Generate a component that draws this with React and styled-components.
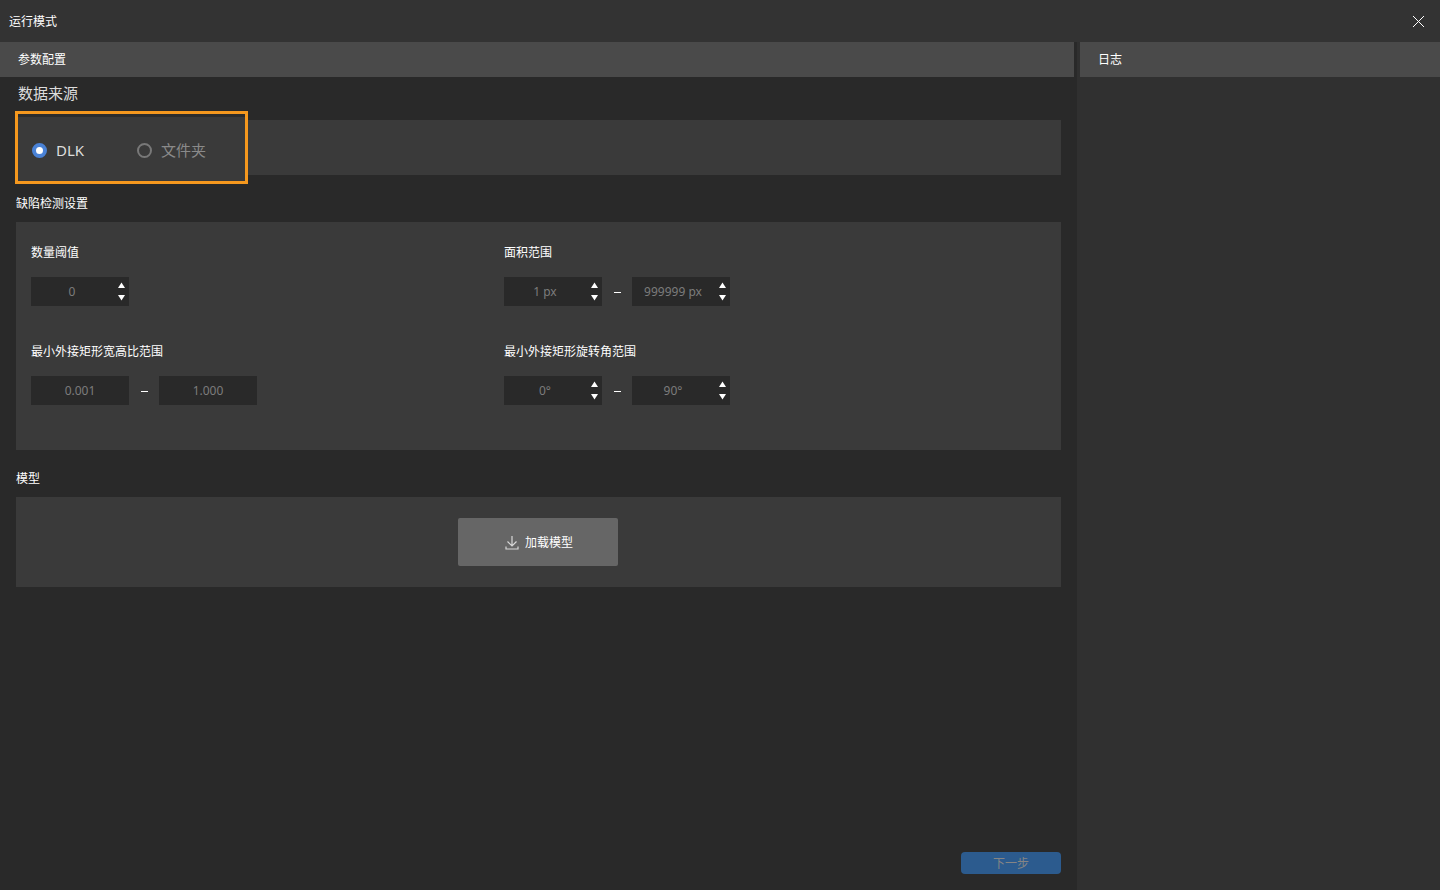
import React, { useState } from 'react';
import styled, { createGlobalStyle, css } from 'styled-components';

const GlobalStyle = createGlobalStyle`
  *, *::before, *::after { box-sizing: border-box; }
  body {
    margin: 0;
    background: #292929;
    color: #ffffff;
    font-family: "Noto Sans", "Noto Sans CJK SC", sans-serif;
    font-size: 12px;
    line-height: 18px;
  }
  button, input { font: inherit; color: inherit; }
  button { border: 0; padding: 0; cursor: pointer; }
`;

const Window = styled.div`
  min-height: 100vh;
  display: flex;
  flex-direction: column;
`;

const TitleBar = styled.header`
  height: 42px;
  padding: 1px 11px 0 9px;
  display: flex;
  align-items: center;
  justify-content: space-between;
  background: #333333;
`;

const WindowTitle = styled.h1`
  margin: 0;
  font-size: 12px;
  line-height: 19px;
  font-weight: 400;
`;

const CloseButton = styled.button`
  width: 21px;
  height: 21px;
  display: grid;
  place-items: center;
  background: none;
`;

const Body = styled.div`
  flex: 1;
  display: flex;
`;

const ConfigPane = styled.main`
  flex: 1;
  min-width: 0;
  display: flex;
  flex-direction: column;
  border-right: 3px solid #292929;
`;

const LogPane = styled.aside`
  flex: 0 0 363px;
  padding-left: 3px;
  background: #303030;
`;

const PaneHeader = styled.h2`
  margin: 0;
  height: 35px;
  padding: 0 18px;
  display: flex;
  align-items: center;
  font-size: 12px;
  font-weight: 400;
  background: #4a4a4a;
`;

const PaneContent = styled.div`
  flex: 1;
  padding: 0 13px 16px 16px;
  display: flex;
  flex-direction: column;
`;

const SectionTitle = styled.h3`
  margin: 0;
  padding: 20px 0 9px;
  font-size: 12px;
  font-weight: 400;

  ${({ $large }) => $large && css`
    padding: 7px 2px 18px;
    font-size: 15px;
    color: #dddddd;
  `}
`;

const Card = styled.section`
  position: relative;
  background: #3a3a3a;
`;

const SourceCard = styled(Card)`
  height: 55px;
`;

const Highlight = styled.div`
  position: absolute;
  top: -9px;
  left: -1px;
  width: 233px;
  height: 73px;
  padding: 5px 14px 0;
  display: flex;
  align-items: center;
  gap: 53px;
  border: 3px solid #f5981e;
  background: linear-gradient(#2c2c2c 3px, #3a3a3a 3px);
`;

const RadioLabel = styled.label`
  display: flex;
  align-items: center;
  gap: 9px;
  font-size: 15px;
  white-space: nowrap;
  color: ${({ $active }) => ($active ? '#dddddd' : '#8a8a8a')};
`;

const Radio = styled.input`
  appearance: none;
  flex: none;
  width: 15px;
  height: 15px;
  margin: 0;
  border: 2px solid #787878;
  border-radius: 50%;

  &:checked {
    border: 4px solid #4a82d6;
    background: #ffffff;
  }
`;

const SettingsCard = styled(Card)`
  padding: 22px 84px 45px 15px;
  display: grid;
  grid-template-columns: 1fr 1fr;
  row-gap: 37px;
`;

const Field = styled.fieldset`
  margin: 0;
  padding: 0;
  border: 0;
  min-width: 0;
`;

const FieldLabel = styled.legend`
  padding: 0 0 15px;
`;

const FieldRow = styled.div`
  display: flex;
  align-items: center;
`;

const Dash = styled.span`
  width: 30px;
  display: flex;
  justify-content: center;

  &::before {
    content: "";
    width: 7px;
    height: 1px;
    margin-top: 2px;
    background: #ffffff;
  }
`;

const Box = styled.div`
  width: 98px;
  height: 29px;
  display: flex;
  background: #292929;
`;

const ValueInput = styled.input`
  flex: 1;
  min-width: 0;
  padding: 0;
  border: 0;
  outline: 0;
  background: none;
  text-align: center;
  color: #7c7c7c;
`;

const Steps = styled.div`
  width: 16px;
  padding: 5px 0 5px 1px;
  display: flex;
  flex-direction: column;
  justify-content: space-between;
  align-items: center;
`;

const StepButton = styled.button`
  display: block;
  width: 9px;
  height: 7px;
  background: none;

  svg { display: block; }
`;

const ModelCard = styled(Card)`
  padding: 21px 22px 21px 21px;
  display: flex;
  justify-content: center;
`;

const LoadButton = styled.button`
  width: 160px;
  height: 48px;
  padding: 2px 0 0 2px;
  display: flex;
  align-items: center;
  justify-content: center;
  gap: 6px;
  border-radius: 2px;
  background: #666666;
`;

const Footer = styled.footer`
  margin-top: auto;
  display: flex;
  justify-content: flex-end;
`;

const NextButton = styled.button`
  width: 100px;
  height: 22px;
  padding-top: 2px;
  border-radius: 4px;
  background: #2c5b8e;
  color: #858585;
`;

function Value({ name, initial, stepper }) {
  const [value, setValue] = useState(initial);
  const step = (delta) =>
    setValue((v) => v.replace(/^\d+/, (n) => String(Math.max(0, Number(n) + delta))));
  return (
    <Box>
      <ValueInput aria-label={name} value={value} onChange={(e) => setValue(e.target.value)} />
      {stepper && (
        <Steps>
          <StepButton type="button" aria-label={`${name} +`} onClick={() => step(1)}>
            <svg width="9" height="7" viewBox="0 0 9 7" fill="#fff"><path d="M4.5 0.5 L8 6 H1 Z" /></svg>
          </StepButton>
          <StepButton type="button" aria-label={`${name} -`} onClick={() => step(-1)}>
            <svg width="9" height="7" viewBox="0 0 9 7" fill="#fff"><path d="M4.5 6.5 L8 1 H1 Z" /></svg>
          </StepButton>
        </Steps>
      )}
    </Box>
  );
}

const fields = [
  { label: '数量阈值', values: ['0'], stepper: true },
  { label: '面积范围', values: ['1 px', '999999 px'], stepper: true },
  { label: '最小外接矩形宽高比范围', values: ['0.001', '1.000'], stepper: false },
  { label: '最小外接矩形旋转角范围', values: ['0°', '90°'], stepper: true },
];

const sources = ['DLK', '文件夹'];

export default function App() {
  const [source, setSource] = useState('DLK');
  return (
    <>
      <GlobalStyle />
      <Window>
        <TitleBar>
          <WindowTitle>运行模式</WindowTitle>
          <CloseButton type="button" aria-label="关闭">
            <svg width="11" height="11" viewBox="0 0 11 11" stroke="#fff" strokeWidth="1" fill="none">
              <path d="M0 0 L11 11 M11 0 L0 11" />
            </svg>
          </CloseButton>
        </TitleBar>
        <Body>
          <ConfigPane>
            <PaneHeader>参数配置</PaneHeader>
            <PaneContent>
              <SectionTitle $large>数据来源</SectionTitle>
              <SourceCard>
                <Highlight role="radiogroup" aria-label="数据来源">
                  {sources.map((s) => (
                    <RadioLabel key={s} $active={s === source}>
                      <Radio type="radio" name="source" checked={s === source} onChange={() => setSource(s)} />
                      {s}
                    </RadioLabel>
                  ))}
                </Highlight>
              </SourceCard>

              <SectionTitle>缺陷检测设置</SectionTitle>
              <SettingsCard>
                {fields.map(({ label, values, stepper }) => (
                  <Field key={label}>
                    <FieldLabel>{label}</FieldLabel>
                    <FieldRow>
                      {values.map((v, i) => (
                        <React.Fragment key={v}>
                          {i > 0 && <Dash />}
                          <Value name={`${label} ${i + 1}`} initial={v} stepper={stepper} />
                        </React.Fragment>
                      ))}
                    </FieldRow>
                  </Field>
                ))}
              </SettingsCard>

              <SectionTitle>模型</SectionTitle>
              <ModelCard>
                <LoadButton type="button">
                  <svg width="14" height="14" viewBox="0 0 14 14" fill="none" stroke="#d8d8d8" strokeWidth="1.2">
                    <path d="M7 0 V10 M2.5 5.5 L7 10 L11.5 5.5 M1 10.5 V13 H13 V10.5" />
                  </svg>
                  加载模型
                </LoadButton>
              </ModelCard>

              <Footer>
                <NextButton type="button">下一步</NextButton>
              </Footer>
            </PaneContent>
          </ConfigPane>
          <LogPane>
            <PaneHeader>日志</PaneHeader>
          </LogPane>
        </Body>
      </Window>
    </>
  );
}
